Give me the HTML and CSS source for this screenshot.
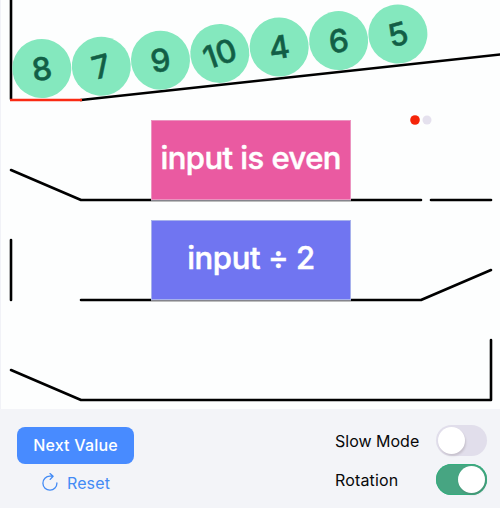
FILE: index.html
```html
<!DOCTYPE html>
<html lang="en">
<head>
<meta charset="utf-8">
<title>Marble Machine</title>
<link rel="stylesheet" href="styles.css">
</head>
<body>
<main class="app">
  <svg class="stage" width="500" height="409" viewBox="0 0 500 409">
    <g class="track">
      <path d="M11 -5V99"/>
      <path d="M81 100L505 54"/>
      <path d="M11 170L81 200H421"/>
      <path d="M431 200H491"/>
      <path d="M11 240V300"/>
      <path d="M81 300H421L491 270"/>
      <path d="M11 370L81 400H491V340"/>
    </g>
    <path class="gate" d="M10 100H82"/>
    <g class="ball" transform="translate(41.8 68.5) rotate(-9)"><circle r="29.5"/><text y="11.5">8</text></g>
    <g class="ball" transform="translate(101.3 66.3) rotate(-15)"><circle r="29.5"/><text y="11.5">7</text></g>
    <g class="ball" transform="translate(160.5 60.2) rotate(-9)"><circle r="29.5"/><text y="11.5">9</text></g>
    <g class="ball" transform="translate(219.8 53.4) rotate(-19)"><circle r="29.5"/><text y="11.5">10</text></g>
    <g class="ball" transform="translate(279.2 47) rotate(-9)"><circle r="29.5"/><text y="11.5">4</text></g>
    <g class="ball" transform="translate(338.6 40.6) rotate(-7)"><circle r="29.5"/><text y="11.5">6</text></g>
    <g class="ball" transform="translate(397.9 34) rotate(-15)"><circle r="29.5"/><text y="11.5">5</text></g>
    <rect class="block condition" x="151.5" y="120.5" width="199" height="79"/>
    <rect class="block operation" x="151.5" y="220.5" width="199" height="79"/>
    <path class="block-base" d="M151 200.5H351M151 300.5H351"/>
    <text class="block-label" x="251" y="169" textLength="181">input is even</text>
    <text class="block-label" x="251.2" y="269" textLength="128">input <tspan dy="2">÷</tspan><tspan dy="-2"> 2</tspan></text>
    <circle class="light-on" cx="415" cy="120" r="4.8"/>
    <circle class="light-off" cx="427" cy="120" r="4.5"/>
  </svg>
  <footer class="controls">
    <div class="actions">
      <button class="next">Next Value</button>
      <button class="reset">
        <svg class="reset-icon" width="16" height="18" viewBox="0 0 16 18">
          <path d="M14.9 10A7 7 0 1 1 7.9 3.2H11.1M8 .6L11.1 3.2L8.2 6.4"/>
        </svg>
        <span>Reset</span>
      </button>
    </div>
    <div class="options">
      <label class="option"><span class="slow-label">Slow Mode</span><span class="toggle"><i class="knob"></i></span></label>
      <label class="option"><span class="rotation-label">Rotation</span><span class="toggle on"><i class="knob"></i></span></label>
    </div>
  </footer>
</main>
</body>
</html>
```

FILE: styles.css
```css
* { box-sizing: border-box; }
body { margin: 0; font-family: Inter, "Liberation Sans", sans-serif; overflow: hidden; }
.app { width: 500px; height: 508px; display: flex; flex-direction: column; background: #fdfefe; }
.stage { display: block; flex: none; box-shadow: inset 1px 0 #f1f2f7; }
.track path { fill: none; stroke: #000; stroke-width: 2.6; stroke-linecap: round; stroke-linejoin: round; }
.gate { stroke: #fa2a14; stroke-width: 2.6; }
.ball circle { fill: #84e8be; }
.ball text { fill: #125f46; stroke: #125f46; stroke-width: .5; font-size: 31.5px; font-weight: 500; text-anchor: middle; }
.block { stroke-width: 1; }
.condition { fill: #ea5aa1; stroke: #eb94c0; }
.operation { fill: #7075f1; stroke: #a7b1ec; }
.block-base { stroke: #85858d; stroke-width: 1; }
.block-label { fill: #fff; stroke: #fff; stroke-width: .5; font-size: 31px; font-weight: 500; text-anchor: middle; }
.light-on { fill: #f52409; }
.light-off { fill: #e5e1ee; }
.controls { flex: 1; display: flex; justify-content: space-between; padding: 16px 13px 0 17px; background: #f3f4f8; }
.actions { display: flex; flex-direction: column; align-items: center; width: 117px; padding-top: 2px; }
button { border: 0; margin: 0; font: inherit; white-space: nowrap; }
.next { width: 117px; height: 37px; padding: 0 0 1px; border-radius: 8px; background: #488bff; color: #fff; font-size: 16px; font-weight: 500; letter-spacing: .2px; }
.reset { display: flex; align-items: center; gap: 9px; height: 37px; padding: 0 0 0 1px; background: none; color: #438bf5; font-size: 16px; letter-spacing: .15px; }
.reset-icon { fill: none; stroke: currentColor; stroke-width: 1.3; stroke-linecap: round; stroke-linejoin: round; position: relative; top: -1px; }
.options { display: flex; flex-direction: column; gap: 8px; width: 152px; }
.option { display: flex; align-items: center; justify-content: space-between; height: 31px; color: #08080a; font-size: 16px; white-space: nowrap; }
.rotation-label { letter-spacing: .15px; }
.toggle { width: 51px; height: 31px; border-radius: 16px; padding: 2px; display: flex; background: #e1deeb; }
.toggle.on { justify-content: flex-end; background: #47a582; box-shadow: inset 0 0 0 1px #35ad7e; }
.knob { width: 27px; height: 27px; border-radius: 50%; background: #fff; box-shadow: 1px 2px 2px rgba(90, 70, 80, .18); }
```
